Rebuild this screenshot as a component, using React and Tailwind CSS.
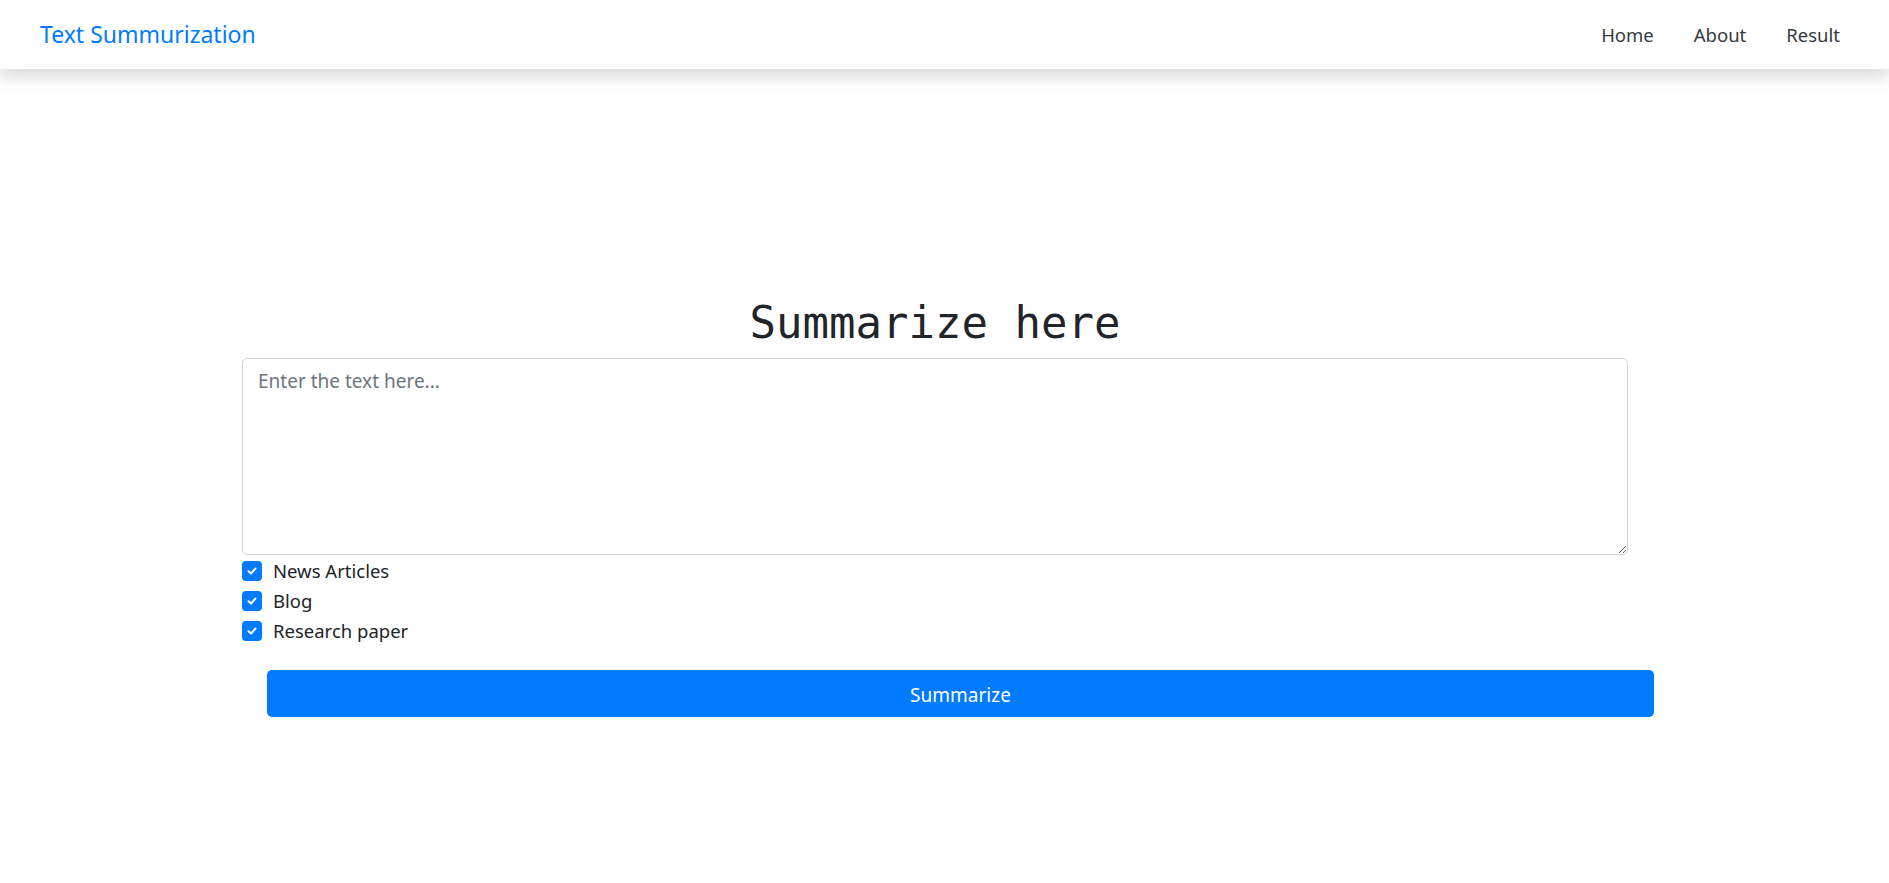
import React, { useState } from 'react';

function Check({ label, checked, onToggle }) {
  return (
    <label className="flex items-center h-[30px] cursor-pointer select-none">
      <span
        onClick={onToggle}
        className={`w-[20px] h-[20px] rounded-[4px] flex items-center justify-center ${checked ? 'bg-[#007bff]' : 'bg-white border border-[#adb5bd]'}`}
      >
        {checked && (
          <svg width="12" height="12" viewBox="0 0 12 12">
            <path d="M2.5 6.2 L5 8.5 L9.5 3.5" fill="none" stroke="white" strokeWidth="2" strokeLinecap="round" strokeLinejoin="round" />
          </svg>
        )}
      </span>
      <span className="ml-[11px] text-[18.5px] text-[#212529]">{label}</span>
    </label>
  );
}

function App() {
  // Form state
  const [text, setText] = useState("");
  const [types, setTypes] = useState({ news: true, blog: true, research: true });

  const toggle = (key) => setTypes({ ...types, [key]: !types[key] });

  return (
    <div className="min-h-screen bg-white" style={{ fontFamily: '"Noto Sans", "Open Sans", sans-serif' }}>
      <nav className="h-[69px] flex items-center justify-between pl-[40px] pr-[49px] bg-white shadow-[0_8px_16px_rgba(0,0,0,0.15)] relative">
        <a href="#" className="text-[23px] text-[#007bff]">Text Summurization</a>
        <div className="flex items-center gap-[40px] text-[18.5px] text-[#343a40]">
          <a href="#">Home</a>
          <a href="#">About</a>
          <a href="#">Result</a>
        </div>
      </nav>

      <main className="pt-[227px]">
        <div className="ml-[242px] w-[1386px]">
          <h1 className="text-center text-[44px] leading-[53px] text-[#212529]" style={{ fontFamily: '"DejaVu Sans Mono", monospace' }}>
            Summarize here
          </h1>
          <textarea
            className="mt-[9px] block w-full h-[197px] border border-[#ced4da] rounded-[5px] px-[15px] py-[8px] text-[19px] text-[#495057] placeholder:text-[#6c757d] outline-none"
            placeholder="Enter the text here..."
            value={text}
            onChange={e => setText(e.target.value)}
          />
          <div className="mt-[1px]">
            <Check label="News Articles" checked={types.news} onToggle={() => toggle('news')} />
            <Check label="Blog" checked={types.blog} onToggle={() => toggle('blog')} />
            <Check label="Research paper" checked={types.research} onToggle={() => toggle('research')} />
          </div>
        </div>
        <button className="mt-[24px] ml-[267px] w-[1387px] h-[47px] pt-[3px] rounded-[5px] bg-[#007bff] text-white text-[19px]">
          Summarize
        </button>
      </main>
    </div>
  );
}

export default App;
